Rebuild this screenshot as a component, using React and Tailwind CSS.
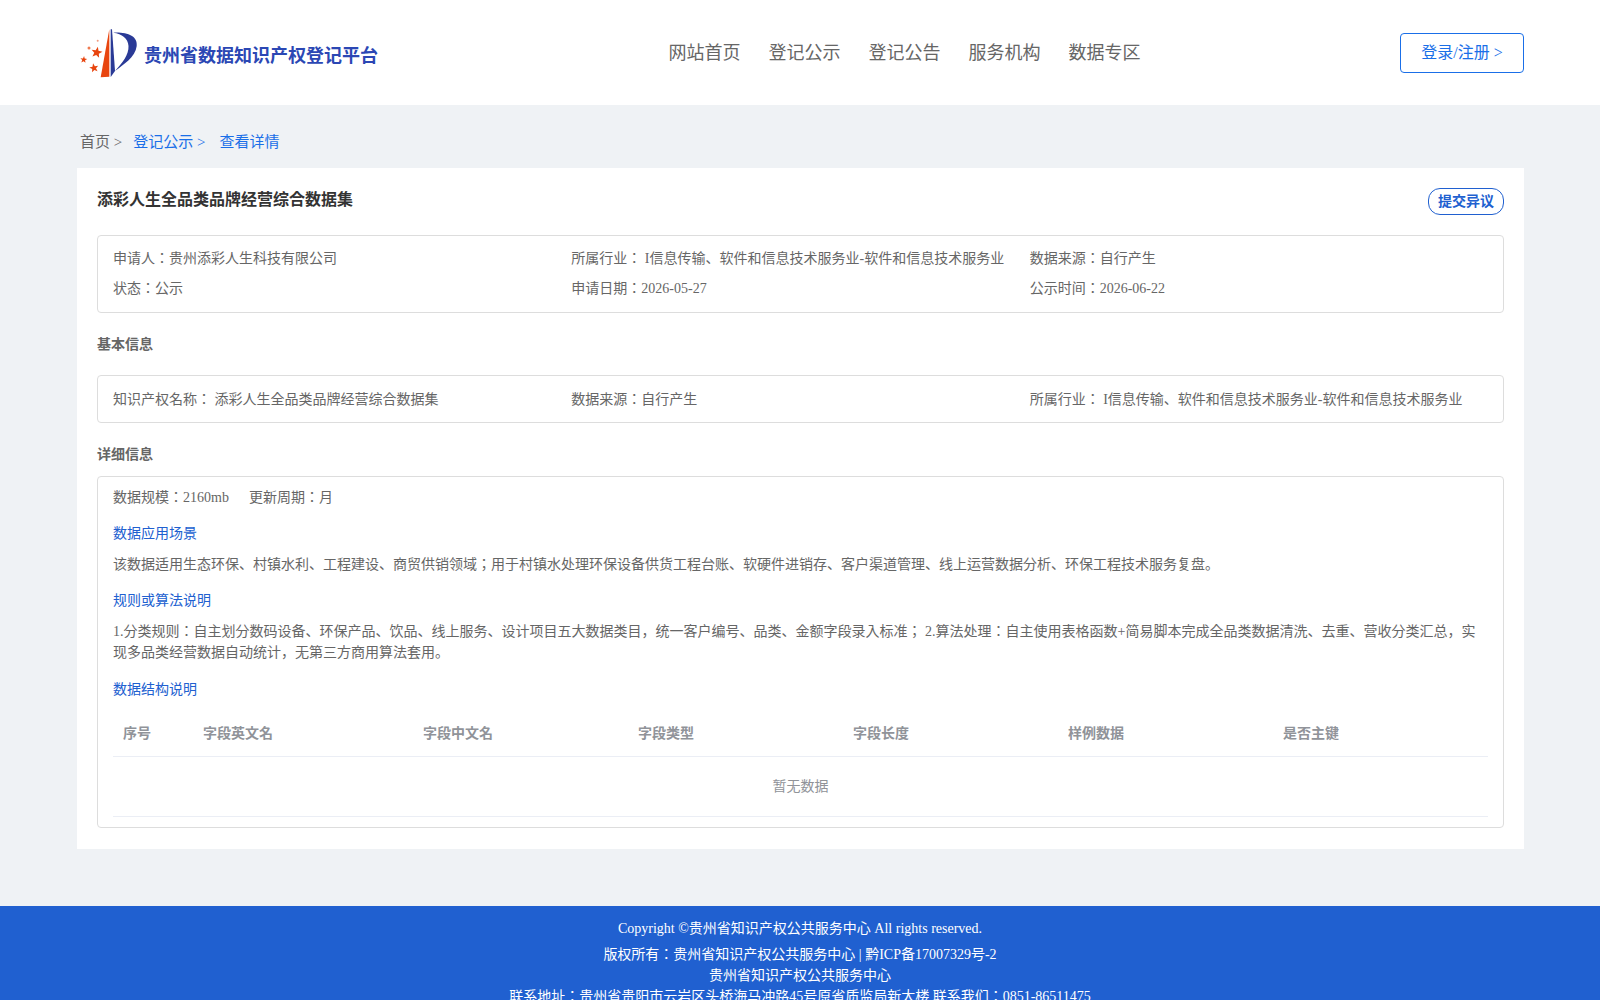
function starPoints(cx, cy, r, rot = 0) {
    const pts = []
    for (let i = 0; i < 10; i++) {
        const radius = i % 2 ? r * 0.42 : r
        const a = -Math.PI / 2 + rot + (i * Math.PI) / 5
        pts.push(`${(cx + radius * Math.cos(a)).toFixed(2)},${(cy + radius * Math.sin(a)).toFixed(2)}`)
    }
    return pts.join(' ')
}

function Logo() {
    return (
        <svg width="60" height="52" viewBox="0 0 60 52" className="shrink-0">
            <path d="M29.3 2.3 L29.3 49.7 L20.7 50.3 Z" fill="#e8450f" />
            <path d="M30.7 2.3 L32 2.3 L35 44 L30.7 50 Z" fill="#2a3a96" />
            <path d="M33.3 5.7 C47 5 58 9 56.7 19 C55.5 30 43 38 35 44 C42 36 49 28 48.5 19 C48 11 42 7 33.3 5.7 Z" fill="#2a3a96" />
            <polygon points={starPoints(16.7, 25.5, 5.8, 0.2)} fill="#e8450f" />
            <polygon points={starPoints(14, 41, 4.8, -0.2)} fill="#e8450f" />
            <polygon points={starPoints(3.7, 32.7, 3.6, 0.1)} fill="#e8450f" />
            <circle cx="9" cy="21" r="1.5" fill="#ef7a50" />
            <circle cx="17.7" cy="13.7" r="1" fill="#ef9a80" />
        </svg>
    )
}

function Row({ children, className = '' }) {
    return <div className={`grid grid-cols-3 px-[15px] ${className}`}>{children}</div>
}

function SubTitle({ children }) {
    return <div className="text-[#2060d0] leading-[20px]">{children}</div>
}

const columns = ['序号', '字段英文名', '字段中文名', '字段类型', '字段长度', '样例数据', '是否主键']

function App() {
    return (
        <div className='min-h-screen bg-[#eff2f5] text-[14px] text-[#666] font-["Liberation_Serif","Noto_Sans_CJK_JP",serif]'>
            <header className="h-[105px] bg-white">
                <div className="ml-[77px] w-[1447px] h-full flex items-center justify-between">
                    <div className="flex items-center gap-[4px] pl-[3px]">
                        <Logo />
                        <span className="text-[18px] font-bold text-[#2b47b4] mt-[7px]">贵州省数据知识产权登记平台</span>
                    </div>
                    <nav className="flex gap-[28px] text-[18px] text-[#666] ml-[31px] mt-[2px]">
                        <a>网站首页</a>
                        <a>登记公示</a>
                        <a>登记公告</a>
                        <a>服务机构</a>
                        <a>数据专区</a>
                    </nav>
                    <button className="w-[124px] h-[40px] mt-[1px] border border-[#1a6fe8] rounded-[4px] text-[16px] text-[#1a6fe8]">登录/注册 &gt;</button>
                </div>
            </header>

            <main className="ml-[77px] w-[1447px] pb-[57px]">
                <div className="h-[63px] pt-[12px] flex items-center pl-[3px] text-[15px]">
                    <span>首页 &gt;</span>
                    <span className="ml-[11px] text-[#1a6fe8]">登记公示 &gt;</span>
                    <span className="ml-[14px] text-[#1a6fe8]">查看详情</span>
                </div>

                <section className="bg-white px-[20px] pt-[20px] pb-[21px]">
                    <div className="flex justify-between items-start h-[47px]">
                        <h1 className="text-[16px] font-bold text-[#333] leading-[24px]">添彩人生全品类品牌经营综合数据集</h1>
                        <button className="w-[76px] h-[27px] border border-[#2060d0] rounded-[12px] font-bold text-[14px] text-[#2060d0]">提交异议</button>
                    </div>

                    <div className="h-[78px] border border-[#ddd] rounded-[4px] pt-[8px] leading-[30px]">
                        <Row>
                            <span>申请人：贵州添彩人生科技有限公司</span>
                            <span>所属行业： I信息传输、软件和信息技术服务业-软件和信息技术服务业</span>
                            <span>数据来源：自行产生</span>
                        </Row>
                        <Row>
                            <span>状态：公示</span>
                            <span>申请日期：2026-05-27</span>
                            <span>公示时间：2026-06-22</span>
                        </Row>
                    </div>

                    <h2 className="mt-[21px] mb-[20px] font-bold leading-[21px] text-[14px]">基本信息</h2>

                    <div className="h-[48px] border border-[#ddd] rounded-[4px] flex items-center">
                        <Row className="w-full">
                            <span>知识产权名称： 添彩人生全品类品牌经营综合数据集</span>
                            <span>数据来源：自行产生</span>
                            <span>所属行业： I信息传输、软件和信息技术服务业-软件和信息技术服务业</span>
                        </Row>
                    </div>

                    <h2 className="mt-[21px] mb-[11px] font-bold leading-[21px] text-[14px]">详细信息</h2>

                    <div className="border border-[#ddd] rounded-[4px] px-[15px] pt-[11px] pb-[10px]">
                        <div className="flex gap-[20px] leading-[20px]">
                            <span>数据规模：2160mb</span>
                            <span>更新周期：月</span>
                        </div>
                        <div className="mt-[16px]"><SubTitle>数据应用场景</SubTitle></div>
                        <p className="mt-[10px] leading-[21px]">该数据适用生态环保、村镇水利、工程建设、商贸供销领域；用于村镇水处理环保设备供货工程台账、软硬件进销存、客户渠道管理、线上运营数据分析、环保工程技术服务复盘。</p>
                        <div className="mt-[16px]"><SubTitle>规则或算法说明</SubTitle></div>
                        <p className="mt-[10px] leading-[21px]">1.分类规则：自主划分数码设备、环保产品、饮品、线上服务、设计项目五大数据类目，统一客户编号、品类、金额字段录入标准； 2.算法处理：自主使用表格函数+简易脚本完成全品类数据清洗、去重、营收分类汇总，实现多品类经营数据自动统计，无第三方商用算法套用。</p>
                        <div className="mt-[17px]"><SubTitle>数据结构说明</SubTitle></div>

                        <div className="mt-[10px]">
                            <div className="grid grid-cols-[80px_220px_repeat(5,215px)] h-[47px] items-center border-b border-[#ebeef5] font-bold text-[#909399]">
                                {columns.map(c => <div key={c} className="pl-[10px]">{c}</div>)}
                            </div>
                            <div className="h-[60px] flex items-center justify-center border-b border-[#ebeef5] text-[#909399]">暂无数据</div>
                        </div>
                    </div>
                </section>
            </main>

            <footer className="bg-[#2060d0] text-white text-center pt-[12px] pb-[20px] leading-[21px]">
                <div className="mb-[5px]">Copyright ©贵州省知识产权公共服务中心 All rights reserved.</div>
                <div>版权所有：贵州省知识产权公共服务中心 | 黔ICP备17007329号-2</div>
                <div>贵州省知识产权公共服务中心</div>
                <div>联系地址：贵州省贵阳市云岩区头桥海马冲路45号原省质监局新大楼 联系我们：0851-86511475</div>
            </footer>
        </div>
    )
}

export default App
